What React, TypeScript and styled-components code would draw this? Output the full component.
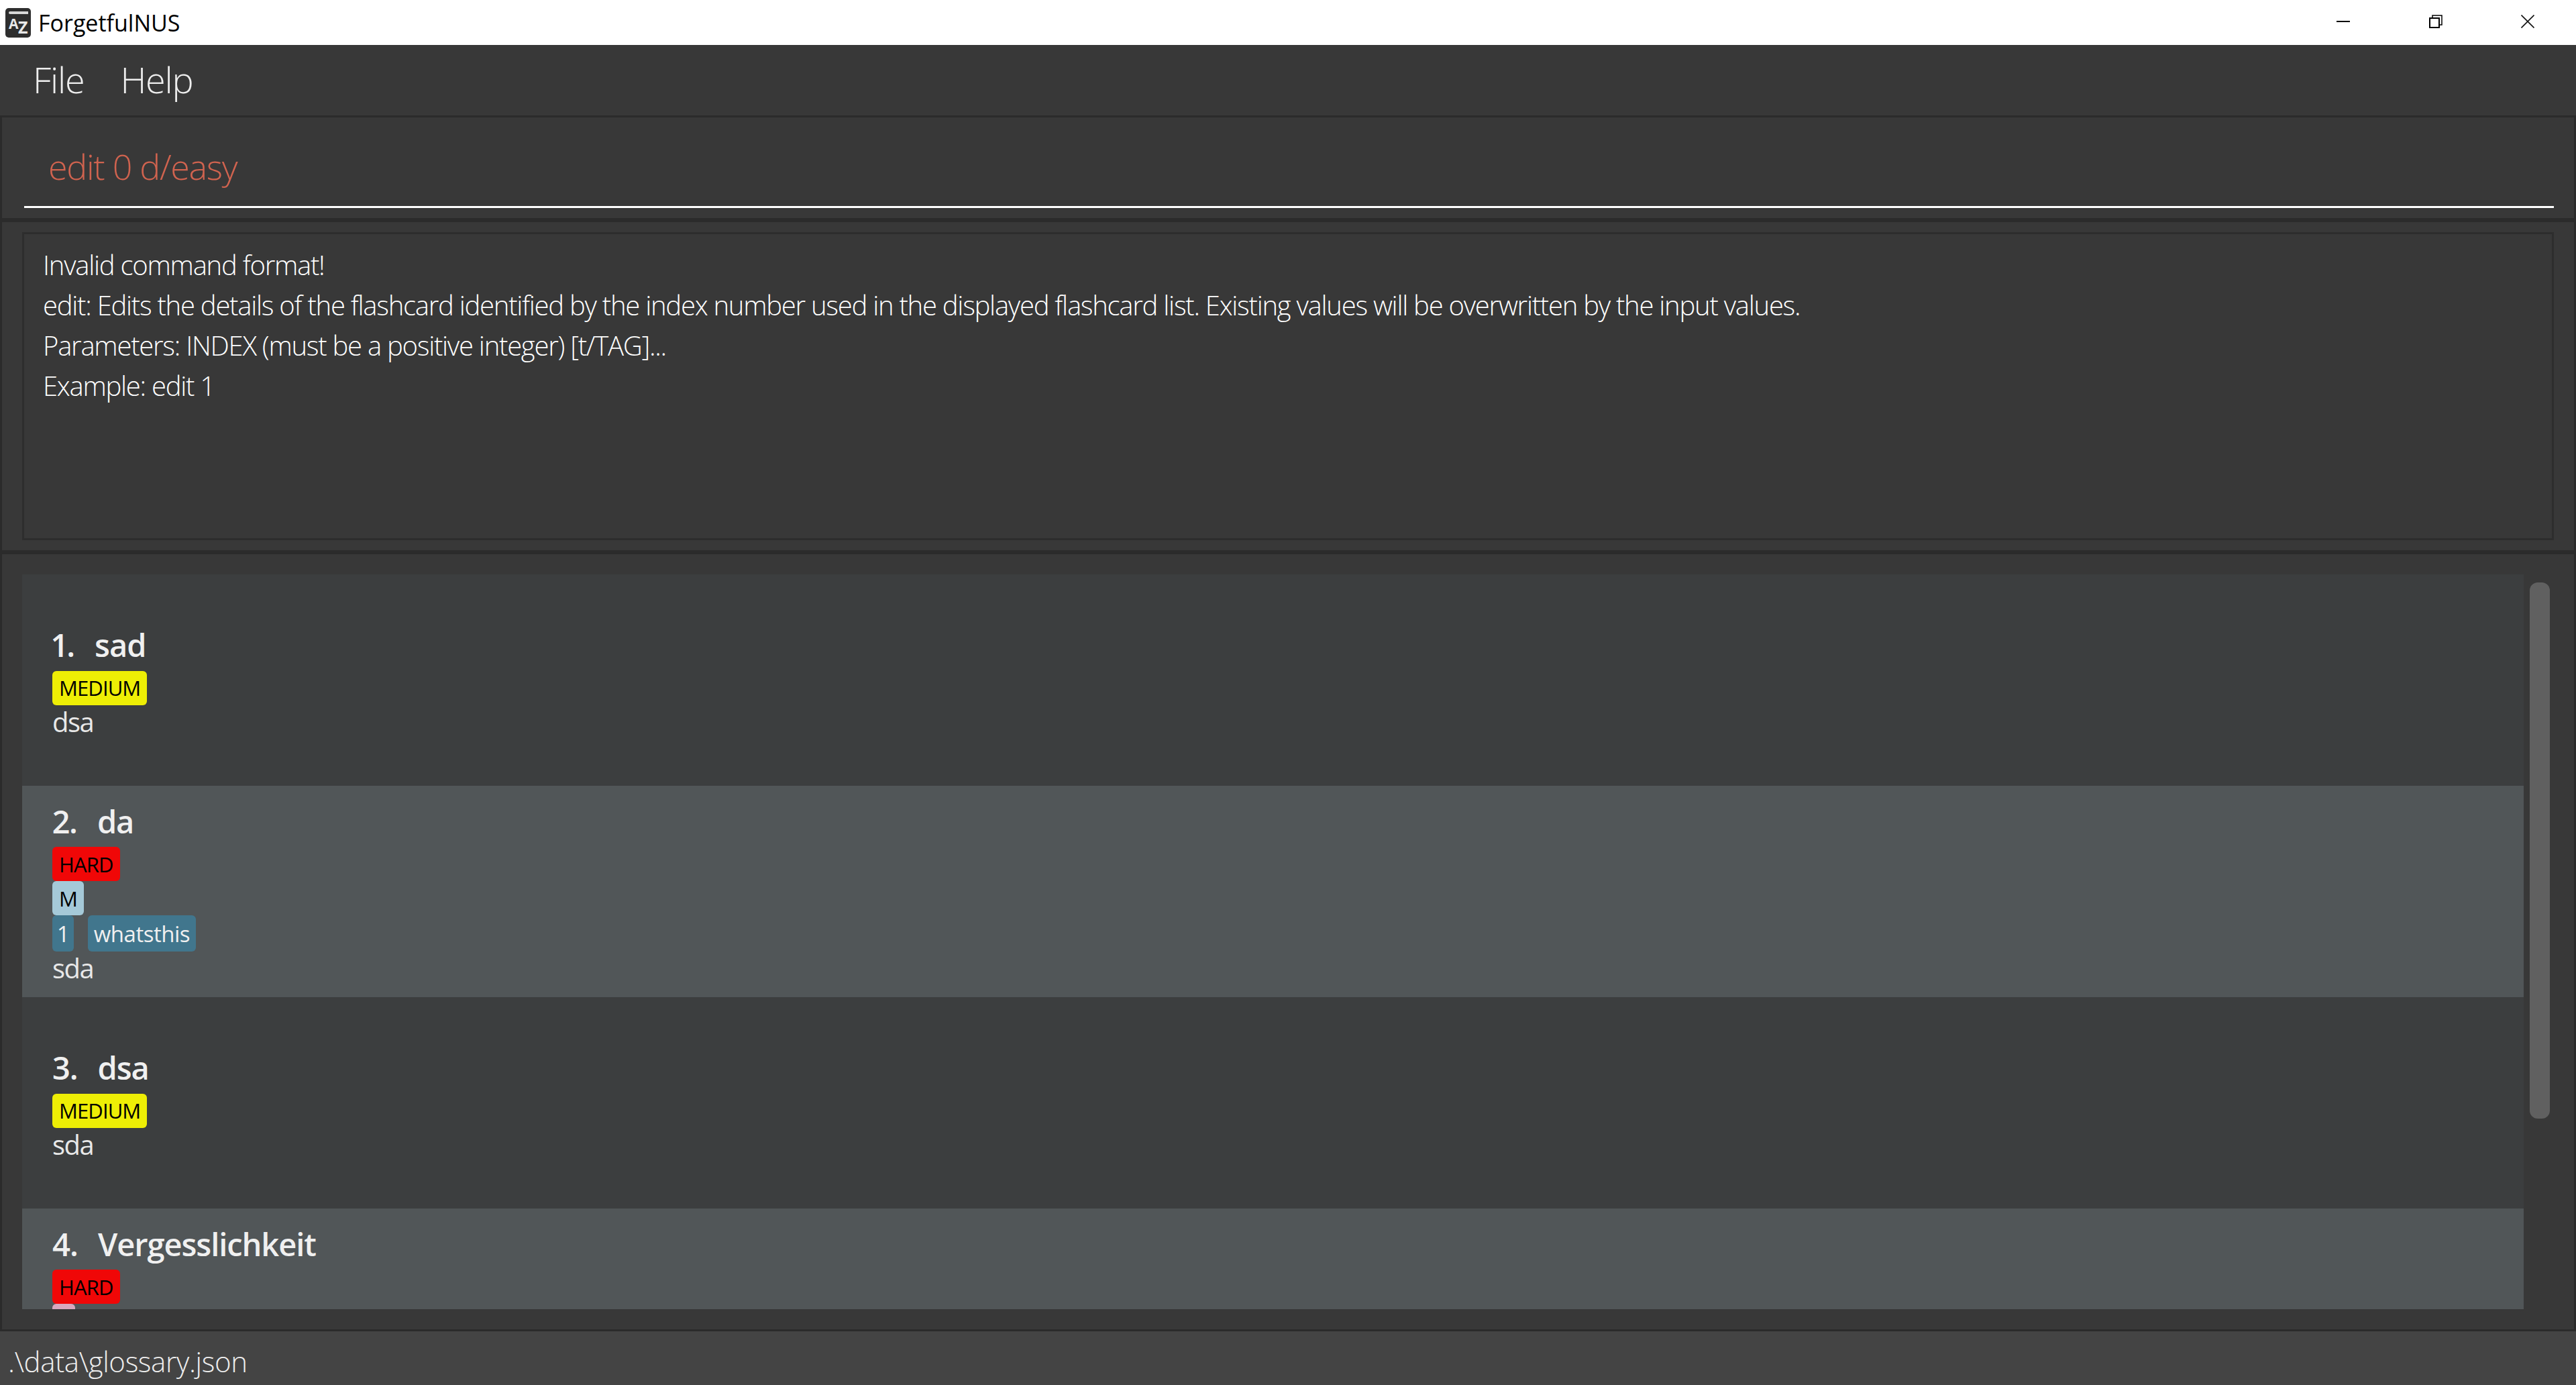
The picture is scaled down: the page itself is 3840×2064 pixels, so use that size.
import styled, { createGlobalStyle } from 'styled-components'

const GlobalStyle = createGlobalStyle`
  html, body {
    margin: 0;
    padding: 0;
    background: #383838;
  }
  * {
    box-sizing: border-box;
  }
`

const LIGHT = '"Open Sans", "Noto Sans", sans-serif'

const Window = styled.div`
  display: flex;
  flex-direction: column;
  width: 3840px;
  height: 2064px;
  overflow: hidden;
  background: #383838;
  font-family: ${LIGHT};
`

const TitleBar = styled.div`
  display: flex;
  align-items: center;
  height: 67px;
  flex: none;
  background: #fff;
  color: #000;
`

const AppIcon = styled.svg`
  width: 38px;
  height: 44px;
  margin-left: 8px;
  flex: none;
`

const AppTitle = styled.span`
  margin-left: 11px;
  font-size: 34px;
  letter-spacing: 0;
  flex: 1;
`

const WindowControls = styled.div`
  display: flex;
  align-self: flex-start;
  padding-right: 3px;
`

const WindowButton = styled.button`
  display: flex;
  align-items: center;
  justify-content: center;
  width: 137.5px;
  height: 64px;
  padding: 0;
  border: 0;
  background: none;
`

const MenuBar = styled.div`
  display: flex;
  align-items: center;
  gap: 54px;
  height: 105px;
  flex: none;
  padding: 0 0 4px 49px;
`

const MenuItem = styled.span`
  font-size: 54px;
  font-weight: 300;
  letter-spacing: -1.2px;
  color: #eee;
`

const Panel = styled.section`
  border: 3px solid #2b2b2b;
  flex: none;
`

const CommandPanel = styled(Panel)`
  height: 156px;
  padding: 0 30px 15px 33px;
  display: flex;
`

const CommandBox = styled.div`
  flex: 1;
  display: flex;
  align-items: center;
  padding: 12px 0 0 36px;
  border-bottom: 3px solid #fff;
  font-size: 52px;
  font-weight: 300;
  letter-spacing: -1.3px;
  color: #d0634f;
`

const ResultPanel = styled(Panel)`
  height: 495px;
  padding: 15px 30px;
  display: flex;
`

const ResultBox = styled.div`
  flex: 1;
  border: 3px solid #2d2d2d;
  padding: 16px 0 0 28px;
  font-size: 40px;
  font-weight: 300;
  line-height: 60px;
  letter-spacing: -1.25px;
  color: #fff;
`

const ListPanel = styled(Panel)`
  height: 1161px;
  padding: 30px 0 30px 30px;
  display: flex;
`

const CardList = styled.div`
  width: 3729px;
  overflow: hidden;
  flex: none;
`

const Card = styled.div<{ $even?: boolean }>`
  display: flex;
  flex-direction: column;
  justify-content: center;
  height: 315px;
  padding-left: 45px;
  background: ${(p) => (p.$even ? '#515658' : '#3c3e3f')};
`

const CardTitle = styled.div`
  display: flex;
  height: 73px;
  padding-bottom: 4px;
  align-items: center;
  font-size: 47px;
  font-weight: 600;
  letter-spacing: -1.05px;
  color: #f0f0f0;
`

const CardIndex = styled.span`
  margin-right: 30px;
  font-variant-numeric: proportional-nums;
`

const TagRow = styled.div`
  display: flex;
  gap: 21px;
`

const Tag = styled.span<{ $bg: string }>`
  display: flex;
  align-items: center;
  height: 51px;
  padding: 0 10px;
  border-radius: 6px;
  background: ${(p) => p.$bg};
  color: #000;
  font-size: 31px;
  font-weight: 500;
  letter-spacing: -0.9px;
  font-variant-numeric: proportional-nums;
`

const TopicTag = styled(Tag)`
  height: 54px;
  padding: 0 9px;
  color: #f0f0f0;
  font-size: 33px;
  font-weight: 400;
  letter-spacing: -0.5px;
`

const Description = styled.div`
  height: 50px;
  line-height: 50px;
  font-size: 40px;
  font-weight: 400;
  letter-spacing: -1.5px;
  color: #e8e8e8;
`

const HiddenRows = styled.div`
  height: 104px;
  flex: none;
`

const ScrollThumb = styled.div`
  width: 30px;
  height: 799px;
  margin: 12px 0 0 9px;
  border-radius: 12px;
  background: #606060;
  flex: none;
`

const StatusBar = styled.div`
  flex: 1;
  display: flex;
  align-items: center;
  padding: 8px 0 0 12px;
  background: #444;
  font-size: 42px;
  font-weight: 300;
  letter-spacing: -0.35px;
  color: #eee;
`

const MEDIUM = '#eeee05'
const HARD = '#f00707'
const TOPIC = '#41768d'

function App() {
  return (
    <>
      <GlobalStyle />
      <Window>
        <TitleBar>
          <AppIcon viewBox="0 0 38 44">
            <rect x="0" y="0" width="38" height="44" rx="5" fill="#2e2e2e" />
            <path d="M7 5h27v4H7a2 2 0 0 1 0-4z" fill="#d8d8d8" />
            <text x="5" y="31" fontFamily="Open Sans" fontWeight="700" fontSize="21" fill="#e8e8e8">A</text>
            <text x="19" y="38" fontFamily="Open Sans" fontWeight="700" fontSize="25" fill="#e8e8e8">Z</text>
          </AppIcon>
          <AppTitle>ForgetfulNUS</AppTitle>
          <WindowControls>
            <WindowButton aria-label="minimize">
              <svg width="20" height="20" viewBox="0 0 20 20"><rect x="0" y="9" width="20" height="2" fill="#000" /></svg>
            </WindowButton>
            <WindowButton aria-label="restore">
              <svg width="20" height="20" viewBox="0 0 20 20" fill="none" stroke="#000" strokeWidth="2">
                <rect x="1" y="5" width="14" height="14" />
                <path d="M5 5V1h14v14h-4" strokeWidth="1.5" />
              </svg>
            </WindowButton>
            <WindowButton aria-label="close">
              <svg width="20" height="20" viewBox="0 0 20 20" stroke="#111" strokeWidth="1.6"><path d="M0.5 0.5l19 19M19.5 0.5l-19 19" /></svg>
            </WindowButton>
          </WindowControls>
        </TitleBar>
        <MenuBar>
          <MenuItem>File</MenuItem>
          <MenuItem>Help</MenuItem>
        </MenuBar>
        <CommandPanel>
          <CommandBox>edit 0 d/easy</CommandBox>
        </CommandPanel>
        <ResultPanel>
          <ResultBox>
            <div>Invalid command format!</div>
            <div>edit: Edits the details of the flashcard identified by the index number used in the displayed flashcard list. Existing values will be overwritten by the input values.</div>
            <div>Parameters: INDEX (must be a positive integer) [t/TAG]...</div>
            <div>Example: edit 1</div>
          </ResultBox>
        </ResultPanel>
        <ListPanel>
          <CardList>
            <Card>
              <CardTitle><CardIndex>1.</CardIndex>sad</CardTitle>
              <TagRow><Tag $bg={MEDIUM}>MEDIUM</Tag></TagRow>
              <Description>dsa</Description>
            </Card>
            <Card $even>
              <CardTitle><CardIndex>2.</CardIndex>da</CardTitle>
              <TagRow><Tag $bg={HARD}>HARD</Tag></TagRow>
              <TagRow><Tag $bg="#a5c9d8">M</Tag></TagRow>
              <TagRow>
                <TopicTag $bg={TOPIC}>1</TopicTag>
                <TopicTag $bg={TOPIC}>whatsthis</TopicTag>
              </TagRow>
              <Description>sda</Description>
            </Card>
            <Card>
              <CardTitle><CardIndex>3.</CardIndex>dsa</CardTitle>
              <TagRow><Tag $bg={MEDIUM}>MEDIUM</Tag></TagRow>
              <Description>sda</Description>
            </Card>
            <Card $even>
              <CardTitle><CardIndex>4.</CardIndex>Vergesslichkeit</CardTitle>
              <TagRow><Tag $bg={HARD}>HARD</Tag></TagRow>
              <TagRow><Tag $bg="#d8a8bf">&nbsp;&nbsp;</Tag></TagRow>
              <HiddenRows />
            </Card>
          </CardList>
          <ScrollThumb />
        </ListPanel>
        <StatusBar>.\data\glossary.json</StatusBar>
      </Window>
    </>
  )
}

export default App
